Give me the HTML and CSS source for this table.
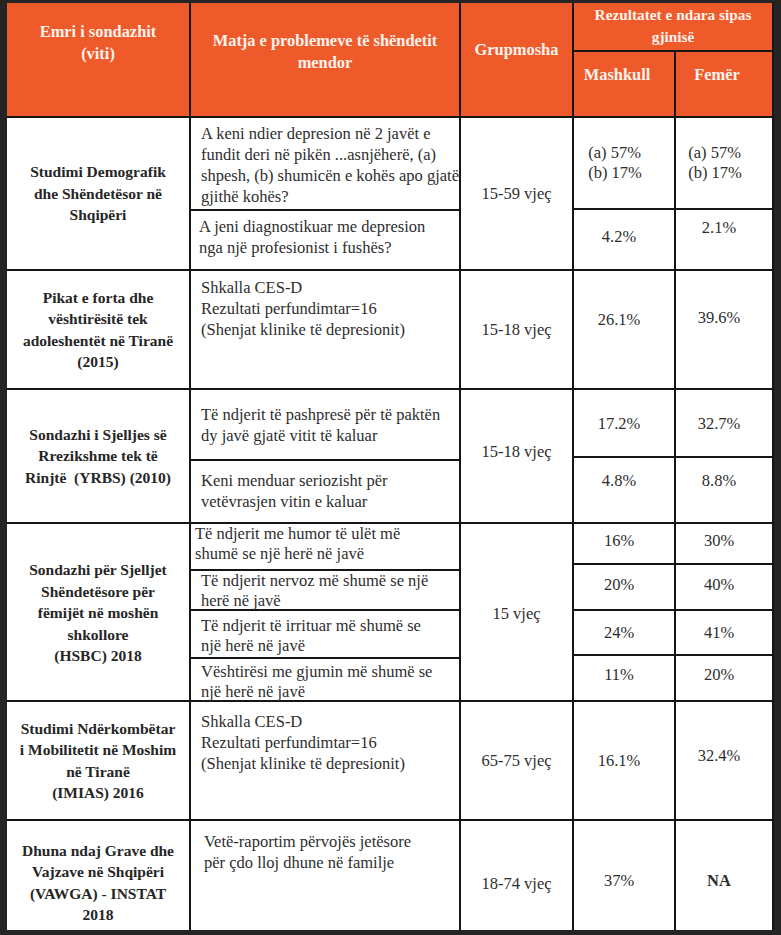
FILE: index.html
```html
<!DOCTYPE html>
<html lang="sq">
<head>
<meta charset="utf-8">
<title>Tabela e sondazheve</title>
<link rel="stylesheet" href="styles.css">
</head>
<body>
<div class="sheet">
  <div class="head">
    <div class="h h-name">Emri i sondazhit<br>(viti)</div>
    <div class="h h-measure">Matja e problemeve të shëndetit<br>mendor</div>
    <div class="h h-age">Grupmosha</div>
    <div class="h h-results">Rezultatet e ndara sipas<br>gjinisë</div>
    <div class="h h-sex">Mashkull</div>
    <div class="h h-sex">Femër</div>
  </div>

  <div class="row r1">
    <div class="c name">Studimi Demografik<br>dhe Shëndetësor në<br>Shqipëri</div>
    <div class="c stack">
      <div class="sub s93 pt5">A keni ndier depresion në 2 javët e<br>fundit deri në pikën ...asnjëherë, (a)<br>shpesh, (b) shumicën e kohës apo gjatë<br>gjithë kohës?</div>
      <div class="sub pt5 pl8">A jeni diagnostikuar me depresion<br>nga një profesionist i fushës?</div>
    </div>
    <div class="c age">15-59 vjeç</div>
    <div class="pairs">
      <div class="pair p92">
        <div class="num left-block">(a) 57%<br>(b) 17%</div>
        <div class="num left-block">(a) 57%<br>(b) 17%</div>
      </div>
      <div class="pair">
        <div class="num up-s">4.2%</div>
        <div class="num up-xl">2.1%</div>
      </div>
    </div>
  </div>

  <div class="row r2">
    <div class="c name">Pikat e forta dhe<br>vështirësitë tek<br>adoleshentët në Tiranë<br>(2015)</div>
    <div class="c stack">
      <div class="sub pt6">Shkalla CES-D<br>Rezultati perfundimtar=16<br>(Shenjat klinike të depresionit)</div>
    </div>
    <div class="c age">15-18 vjeç</div>
    <div class="pairs">
      <div class="pair">
        <div class="num up-l">26.1%</div>
        <div class="num up-xl">39.6%</div>
      </div>
    </div>
  </div>

  <div class="row r3">
    <div class="c name">Sondazhi i Sjelljes së<br>Rrezikshme tek të<br>Rinjtë&nbsp; (YRBS) (2010)</div>
    <div class="c stack">
      <div class="sub s71 pt14">Të ndjerit të pashpresë për të paktën<br>dy javë gjatë vitit të kaluar</div>
      <div class="sub pt9">Keni menduar seriozisht për<br>vetëvrasjen vitin e kaluar</div>
    </div>
    <div class="c age up-m">15-18 vjeç</div>
    <div class="pairs">
      <div class="pair p68">
        <div class="num">17.2%</div>
        <div class="num">32.7%</div>
      </div>
      <div class="pair">
        <div class="num up-l">4.8%</div>
        <div class="num up-l">8.8%</div>
      </div>
    </div>
  </div>

  <div class="row r4">
    <div class="c name">Sondazhi për Sjelljet<br>Shëndetësore për<br>fëmijët në moshën<br>shkollore<br>(HSBC) 2018</div>
    <div class="c stack tight">
      <div class="sub s47 pt0 pl4">Të ndjerit me humor të ulët më<br>shumë se një herë në javë</div>
      <div class="sub s40 pt0">Të ndjerit nervoz më shumë se një<br>herë në javë</div>
      <div class="sub s48 pt5">Të ndjerit të irrituar më shumë se<br>një herë në javë</div>
      <div class="sub pt3">Vështirësi me gjumin më shumë se<br>një herë në javë</div>
    </div>
    <div class="c age">15 vjeç</div>
    <div class="pairs">
      <div class="pair p41">
        <div class="num up-s">16%</div>
        <div class="num up-s">30%</div>
      </div>
      <div class="pair p46">
        <div class="num up-s">20%</div>
        <div class="num up-s">40%</div>
      </div>
      <div class="pair p45">
        <div class="num">24%</div>
        <div class="num">41%</div>
      </div>
      <div class="pair">
        <div class="num up-m">11%</div>
        <div class="num up-m">20%</div>
      </div>
    </div>
  </div>

  <div class="row r5">
    <div class="c name">Studimi Ndërkombëtar<br>i Mobilitetit në Moshim<br>në Tiranë<br>(IMIAS) 2016</div>
    <div class="c stack">
      <div class="sub pt9">Shkalla CES-D<br>Rezultati perfundimtar=16<br>(Shenjat klinike të depresionit)</div>
    </div>
    <div class="c age">65-75 vjeç</div>
    <div class="pairs">
      <div class="pair">
        <div class="num">16.1%</div>
        <div class="num up-m">32.4%</div>
      </div>
    </div>
  </div>

  <div class="row r6">
    <div class="c name dn-m">Dhuna ndaj Grave dhe<br>Vajzave në Shqipëri<br>(VAWGA) - INSTAT<br>2018</div>
    <div class="c stack">
      <div class="sub pt10 pl12">Vetë-raportim përvojës jetësore<br>për çdo lloj dhune në familje</div>
    </div>
    <div class="c age dn-l">18-74 vjeç</div>
    <div class="pairs">
      <div class="pair">
        <div class="num dn-s">37%</div>
        <div class="num dn-s bold">NA</div>
      </div>
    </div>
  </div>
</div>
</body>
</html>
```

FILE: styles.css
```css
* {
  box-sizing: border-box;
  margin: 0;
  padding: 0;
}

html, body {
  background: #242424;
}

body {
  font-family: "Liberation Serif", "Times New Roman", serif;
  color: #2e2e2e;
  height: 935px;
  overflow: hidden;
}

.sheet {
  width: 767px;
  margin: 3px 0 0 7px;
  background: #fff;
}

/* header */
.head {
  display: grid;
  grid-template-columns: 184px 270px 113px 102px 98px;
  grid-template-rows: 49px 66px;
  background: #ef5a2b;
  color: #fff3ec;
  font-weight: bold;
  font-size: 16.4px;
  line-height: 21.5px;
  text-align: center;
}

.h {
  border-right: 2px solid #151515;
  border-bottom: 2px solid #151515;
}

.h-name {
  grid-row: 1 / 3;
  padding-top: 18px;
}

.h-measure {
  grid-row: 1 / 3;
  padding-top: 27px;
}

.h-age {
  grid-row: 1 / 3;
  padding-top: 36px;
}

.h-results {
  grid-column: 4 / 6;
  font-size: 15.3px;
  line-height: 22px;
  padding-top: 1px;
}

.h-sex {
  padding-top: 12px;
  padding-right: 14px;
}

/* body rows */
.row {
  display: grid;
  grid-template-columns: 184px 270px 113px 200px;
  border-bottom: 2px solid #151515;
  font-size: 16.5px;
  line-height: 21px;
}

.r1 { height: 153px; }
.r2 { height: 119px; }
.r3 { height: 134px; }
.r4 { height: 178px; }
.r5 { height: 119px; }
.r6 { height: 109px; border-bottom: none; }

.c {
  border-right: 2px solid #151515;
}

.name {
  display: flex;
  align-items: center;
  justify-content: center;
  text-align: center;
  font-weight: bold;
  font-size: 15.5px;
  line-height: 21.5px;
  white-space: nowrap;
  color: #262626;
}

.stack {
  display: flex;
  flex-direction: column;
  white-space: nowrap;
}

.stack.tight {
  line-height: 20px;
}

.sub {
  padding-left: 10px;
  border-bottom: 2px solid #151515;
}

.sub:last-child {
  border-bottom: none;
  flex: 1;
}

.s93 { height: 93px; flex: none; }
.s71 { height: 71px; flex: none; }
.s47 { height: 47px; flex: none; }
.s40 { height: 40px; flex: none; }
.s48 { height: 48px; flex: none; }

.pt0 { padding-top: 0; }
.pt3 { padding-top: 3px; }
.pt5 { padding-top: 5px; }
.pt6 { padding-top: 6px; }
.pt9 { padding-top: 9px; }
.pt10 { padding-top: 10px; }
.pt14 { padding-top: 14px; }
.pl4 { padding-left: 4px; }
.pl8 { padding-left: 8px; }
.pl12 { padding-left: 13px; }

.age {
  display: flex;
  align-items: center;
  justify-content: center;
}

.pairs {
  display: flex;
  flex-direction: column;
}

.pair {
  display: grid;
  grid-template-columns: 102px 98px;
  border-bottom: 2px solid #151515;
}

.pair:last-child {
  border-bottom: none;
  flex: 1;
}

.p92 { height: 92px; flex: none; }
.p68 { height: 68px; flex: none; }
.p41 { height: 41px; flex: none; }
.p46 { height: 46px; flex: none; }
.p45 { height: 45px; flex: none; }

.num {
  display: flex;
  align-items: center;
  justify-content: center;
  text-align: center;
  padding-right: 10px;
  border-right: 2px solid #151515;
}

.left-block {
  text-align: left;
  padding-right: 18px;
  line-height: 20px;
}

.bold {
  font-weight: bold;
}

.up-s { padding-bottom: 6px; }
.up-m { padding-bottom: 10px; }
.up-l { padding-bottom: 20px; }
.up-xl { padding-bottom: 24px; }
.dn-s { padding-top: 10px; }
.dn-m { padding-top: 14px; }
.dn-l { padding-top: 16px; }
```
